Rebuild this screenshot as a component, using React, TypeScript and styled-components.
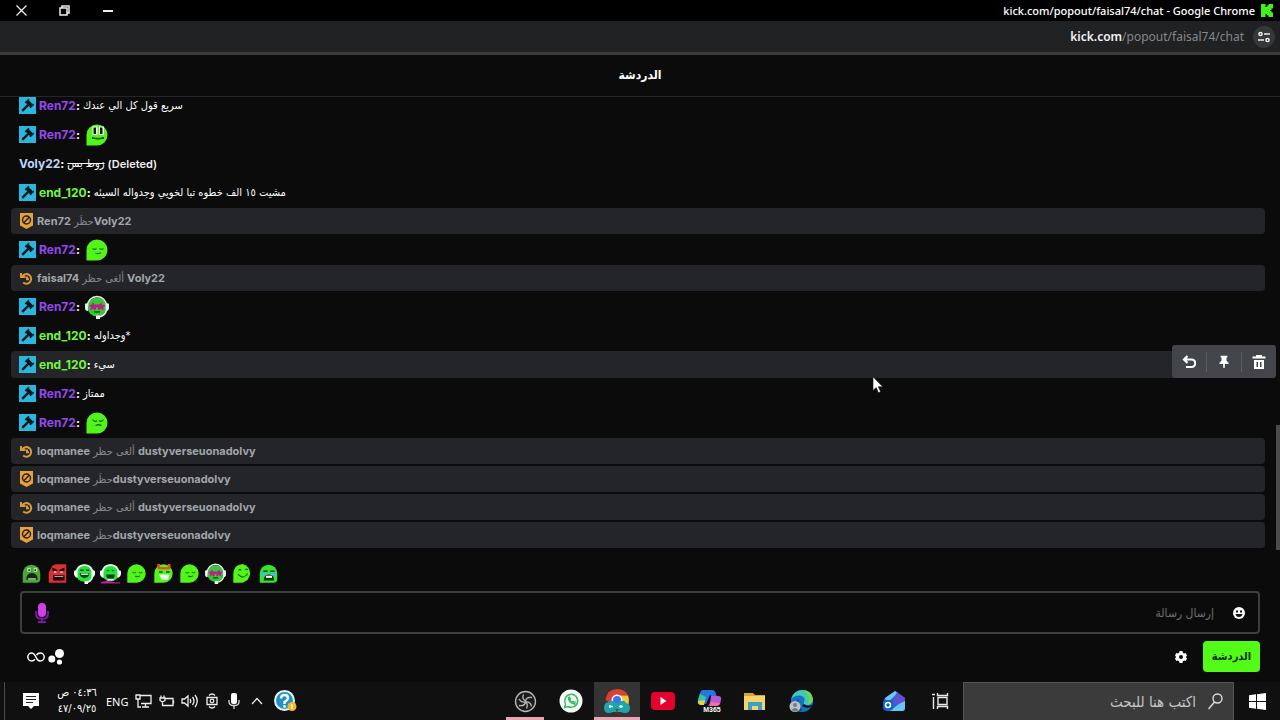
import React from "react";
import styled, { createGlobalStyle, css } from "styled-components";

const GlobalStyle = createGlobalStyle`
  *, *::before, *::after { box-sizing: border-box; }
  body {
    margin: 0;
    background: #0b0b0b;
    color: #fff;
    font-family: Inter, "DejaVu Sans Condensed", "DejaVu Sans", sans-serif;
    font-size: 13px;
    font-variant-ligatures: no-contextual;
  }
  button { font: inherit; color: inherit; background: none; border: 0; padding: 0; }
  svg { display: block; flex: none; }
`;

const arabicFace = `"DejaVu Sans Condensed", "DejaVu Sans", sans-serif`;

const Page = styled.div`
  display: flex;
  flex-direction: column;
  height: 100vh;
  overflow: hidden;
`;

/* ---------- browser window ---------- */

const TitleBar = styled.header`
  display: flex;
  align-items: center;
  justify-content: space-between;
  height: 21px;
  flex: none;
  background: #000;
  padding-right: 7px;
  font: 500 11px "Noto Sans", sans-serif;
`;

const WindowButtons = styled.div`
  display: flex;
`;

const WindowButton = styled.button`
  display: grid;
  place-items: center;
  width: 43px;
  height: 21px;
`;

const WindowTitle = styled.div`
  display: flex;
  align-items: center;
  gap: 6px;
`;

const AddressBar = styled.div`
  display: flex;
  align-items: center;
  justify-content: flex-end;
  gap: 9px;
  height: 34px;
  flex: none;
  padding-right: 5px;
  background: #202123;
  border-bottom: 3px solid #3a3b3c;
  color: #85888b;
  font: 12px "Noto Sans", sans-serif;
  b { color: #f2f2f2; font-weight: 600; }
`;

const SiteButton = styled.button`
  display: grid;
  place-items: center;
  width: 22px;
  height: 22px;
  border-radius: 50%;
  background: #35373a;
`;

/* ---------- chat ---------- */

const ChatHeader = styled.h1`
  display: grid;
  place-items: center;
  height: 42px;
  margin: 0;
  padding-bottom: 2px;
  flex: none;
  border-bottom: 1px solid #242628;
  font: 700 12px ${arabicFace};
`;

const Feed = styled.main`
  position: relative;
  display: flex;
  flex: 1;
  min-height: 0;
  flex-direction: column;
  justify-content: flex-end;
  overflow: hidden;
`;

const Messages = styled.ul`
  display: flex;
  flex-direction: column;
  gap: 2px;
  margin: 0;
  padding: 0 15px 2px 11px;
  list-style: none;
`;

const Thumb = styled.div`
  position: absolute;
  right: 0;
  bottom: 0;
  width: 4px;
  height: 125px;
  background: #4a4b4d;
`;

const Row = styled.li<{ $hovered?: boolean }>`
  position: relative;
  display: flex;
  align-items: center;
  gap: 3px;
  height: 27px;
  padding-left: 8px;
  border-radius: 4px;
  background: ${(p) => (p.$hovered ? "#232528" : "transparent")};
`;

const Notice = styled(Row)`
  height: 26px;
  gap: 3px;
  background: #232528;
  color: #a1a6aa;
  font-size: 11px;
  white-space: pre;
  b { font-weight: 700; }
`;

const Arabic = styled.bdi<{ $dim?: boolean }>`
  font-family: ${arabicFace};
  font-size: 11px;
  color: ${(p) => (p.$dim ? "#85898d" : "#fff")};
`;

const Author = styled.span<{ $color: string }>`
  font-weight: 700;
  font-size: 12px;
  color: ${(p) => p.$color};
  i { color: #fff; font-style: normal; }
`;

const Deleted = styled.span`
  font-size: 11px;
  font-weight: 600;
  color: #f0f0f0;
`;

const EmoteSlot = styled.span`
  margin-left: 2px;
`;

const Actions = styled.div`
  position: absolute;
  right: -11px;
  top: -6px;
  z-index: 1;
  display: flex;
  align-items: center;
  height: 33px;
  border-radius: 3px;
  background: #42464a;
`;

const Action = styled.button`
  display: grid;
  place-items: center;
  width: 34px;
  height: 20px;
  & + & { border-left: 1px solid #5b5f63; width: 35px; }
`;

const Cursor = styled.svg`
  position: absolute;
  left: 68.7%;
  top: 25px;
  z-index: 2;
`;

const Composer = styled.form`
  flex: none;
  padding: 12px 20px 10px;
`;

const QuickEmotes = styled.div`
  display: flex;
  justify-content: space-between;
  width: 258px;
  height: 22px;
  margin-left: 1px;
`;

const MessageBox = styled.div`
  display: flex;
  align-items: center;
  height: 43px;
  margin-top: 7px;
  padding: 0 13px;
  border: 2px solid #3c3e40;
  border-radius: 4px;
`;

const MessageInput = styled.input`
  flex: 1;
  min-width: 0;
  margin: 0 19px;
  padding: 0;
  border: 0;
  background: none;
  color: #fff;
  outline: none;
  font: 12px ${arabicFace};
  &::placeholder { color: #6d7072; opacity: 1; }
`;

const Controls = styled.div`
  display: flex;
  align-items: center;
  height: 31px;
  margin-top: 7px;
  padding-left: 7px;
  gap: 3px;
`;

const SendButton = styled.button`
  width: 57px;
  height: 31px;
  margin-left: 13px;
  border-radius: 4px;
  background: #53fc18;
  color: #0d2a06;
  font: 700 11px ${arabicFace};
`;

const SettingsButton = styled.button`
  margin-left: auto;
`;

/* ---------- taskbar ---------- */

const Taskbar = styled.footer`
  display: flex;
  align-items: stretch;
  height: 38px;
  flex: none;
  background: #101010;
  font: 11px "Noto Sans", "DejaVu Sans Condensed", sans-serif;
`;

const Tray = styled.div`
  display: flex;
  align-items: center;
  margin-left: 4px;
  border-left: 1px solid #4a4a4a;
`;

const TrayButton = styled.button<{ $w?: number }>`
  display: grid;
  place-items: center;
  width: ${(p) => p.$w ?? 23}px;
  height: 38px;
`;

const Clock = styled.time`
  width: 44px;
  margin: 0 7px 0 -2px;
  text-align: center;
  font: 11px/16px ${arabicFace};
`;

const Apps = styled.div`
  display: flex;
  margin-left: auto;
`;

const AppButton = styled.button<{ $active?: boolean; $running?: boolean }>`
  position: relative;
  display: grid;
  place-items: center;
  width: 46px;
  background: ${(p) => (p.$active ? "#343434" : "transparent")};
  ${(p) =>
    p.$running &&
    css`
      &::after {
        content: "";
        position: absolute;
        left: ${p.$active ? 0 : 4}px;
        right: ${p.$active ? 0 : 4}px;
        bottom: 0;
        height: 3px;
        background: #e8a6b4;
      }
    `}
`;

const Pinned = styled.div`
  display: flex;
  margin-left: 47px;
`;

const Search = styled.label`
  display: flex;
  align-items: center;
  gap: 12px;
  width: 271px;
  padding: 0 10px;
  border: 1px solid #555;
  border-bottom: 0;
  background: #3b3b3b;
  input {
    flex: 1;
    min-width: 0;
    padding: 0;
    border: 0;
    background: none;
    outline: none;
    font: 15px ${arabicFace};
    &::placeholder { color: #c4c4c4; opacity: 1; }
  }
`;

/* ---------- drawings ---------- */

const Badge = () => (
  <svg width="17" height="17" viewBox="0 0 17 17">
    <path fill="#2cb5dd" d="M0 0h17v17H0z" />
    <g stroke="#05181d" fill="none">
      <path strokeWidth="2.400" d="m3.200 13.800 6-6" />
      <path strokeWidth="4" d="m8 4.200 4.600 4.600" />
      <path strokeWidth="1.600" d="m6.300 5.900 3.700-3.700M11 10.800l3.700-3.700" />
    </g>
  </svg>
);

const BanIcon = () => (
  <svg width="15" height="16" viewBox="0 0 15 16">
    <path fill="#e9a13b" d="M1 0h13v12.500l-6.500 3.500L1 12.500z" />
    <circle cx="7.500" cy="7" r="4" fill="none" stroke="#2a2114" strokeWidth="1.500" />
    <path stroke="#2a2114" strokeWidth="1.500" d="m4.800 9.700 5.400-5.400" />
  </svg>
);

const UnbanIcon = () => (
  <svg width="15" height="15" viewBox="0 0 15 15" fill="none" stroke="#dc9a35" strokeWidth="2">
    <path d="M3.200 5.500a4.800 4.800 0 1 1 1 6" />
    <path d="M2 2v4h4.500M8 5.500v2.800h2" />
  </svg>
);

type EmoteKind =
  | "eyes" | "calm" | "sad" | "shades" | "yell" | "rage" | "laugh" | "cheer"
  | "mask" | "smile" | "cry";

const BLOB = "M12 1.500a10.500 10.500 0 0 1 0 21H1.500V12A10.500 10.500 0 0 1 12 1.500z";
const DOME = "M2 22.500V12a10 10 0 0 1 20 0v6q0 4.500-4.500 4.500z";

const faces: Record<EmoteKind, React.ReactNode> = {
  eyes: (
    <>
      <path fill="#53f41c" d={BLOB} />
      <path fill="#fff" d="M7.500 3.500h5v8.500h-5zM14 3.500h5v8.500h-5z" />
      <path fill="#10200a" d="M8.500 4.500H11V11H8.500zM15 4.500h2.500V11H15z" />
      <path stroke="#176808" strokeWidth="1.800" fill="none" d="M7 15h1.500q4.500 1.500 9 0H19" />
    </>
  ),
  calm: (
    <>
      <path fill="#53f41c" d={BLOB} />
      <path stroke="#1d7d0a" strokeWidth="1.300" fill="none" d="M7.500 10.500q2 1.800 4 0M14.500 10.500q2 1.800 4 0M10.500 15q3 1.500 5.500-.500" />
    </>
  ),
  sad: (
    <>
      <path fill="#53f41c" d={BLOB} />
      <path stroke="#1d6d0a" strokeWidth="1.300" fill="none" d="M7.500 8.500q2 3 4.500 1M14 9.500q2.500 2 4.500-1M10.500 14.500q3-1.500 6 0" />
    </>
  ),
  shades: (
    <>
      <circle cx="12" cy="12" r="9.500" fill="#35c936" />
      <path stroke="#eee" strokeWidth="1.600" fill="none" d="M2.500 11a9.500 9.500 0 0 1 19 0v4q-1 6-8 7" />
      <path fill="#eee" d="M0 9.500q0-1.500 3-1.500v8q-3 0-3-3zM24 9.500q0-1.500-3-1.500v8q3 0 3-3zM11 20.500h4V24h-4z" />
      <path fill="#c01b90" d="m8 7 1.300 2.600h5.400L16 7l1.300 2.700 3 .4-2 2.200.4 3-2.700-1.300-2.700 1.300-.3-2.800h-2l-.3 2.800L8 14l-2.700 1.300.4-3-2-2.200 3-.4z" />
      <path stroke="#14500f" strokeWidth="1.500" d="M9 17h6" />
    </>
  ),
  yell: (
    <>
      <path fill="#4aa83a" d={DOME} />
      <path fill="#b9dcae" d="M7 5.500h4v4.500H7zM14.500 5.500h4v4.500h-4z" />
      <path fill="#132a0d" d="M8.500 7H10v2H8.500zM15.500 7H17v2h-1.500zM6 19q0-7.500 6.500-7.500T19 19z" />
      <path fill="#c6dcc0" d="M8 17.500h9V19H8z" />
    </>
  ),
  rage: (
    <>
      <path fill="#d93035" d="M2 22.500V11l4-8 4-1.500h12v21z" />
      <path fill="#200707" d="m6 5 6 3-1 2.500-5-2zM20 5l-6 3 1 2.500 5-2zM7 14h13v6H7z" />
      <path fill="#eed0c8" d="M8 9.500h3V11H8zM15 9.500h3V11h-3zM8.500 15h10v1h-10z" />
    </>
  ),
  laugh: (
    <>
      <circle cx="12" cy="11.500" r="10" fill="#24e43c" />
      <path stroke="#eafff0" strokeWidth="2" fill="none" d="M3 9a9.500 9.500 0 0 1 18 0M21 16q-1 5-7 6" />
      <path fill="#fff" d="M0 10q0-2 4-2v9q-4-1-4-5zM24 10q0-2-4-2v9q4-1 4-5zM12 20.500h4V24h-4z" />
      <path fill="#0b4315" d="M7 7.500h4V9H7zM13.500 7.500h4V9h-4zM6.500 11.500h11q0 5.500-5.500 5.500t-5.500-5.500z" />
      <path fill="#e9fff0" d="M8 12h8.500v1.500H8z" />
    </>
  ),
  cheer: (
    <>
      <circle cx="12" cy="11" r="10" fill="#24e43c" />
      <path stroke="#eafff0" strokeWidth="2" fill="none" d="M3 9a9.500 9.500 0 0 1 18 0" />
      <path fill="#fff" d="M0 10q0-2 4-2v9q-4-1-4-5zM24 10q0-2-4-2v9q4-1 4-5z" />
      <path fill="#0b4315" d="M6.500 9 10.500 7.500v2zM17.500 9l-4-1.500v2zM7 13h10q-.500 6-5 6t-5-6z" />
      <path fill="#e7e5ef" d="M8.500 18h7v2h-7z" />
      <path fill="#c41aa0" d="M1 22q5-2 11-1t11 1v1.500H1z" />
    </>
  ),
  mask: (
    <>
      <path fill="#53f41c" d={BLOB} />
      <path fill="#e95324" d="M5 1h3v3.500h9V1h3v5l-2 1.500H7L5 6z" />
      <path fill="#154d09" d="M7 9.500h4V11H7zM15 9.500h4V11h-4z" />
      <path fill="#effbea" d="M7 13h12l-2 6h-7z" />
    </>
  ),
  smile: (
    <>
      <path fill="#53f41c" d="M12 1a11 11 0 0 1 0 21.500H1.500V12Q2 2 12 1z" />
      <path stroke="#176808" strokeWidth="1.400" fill="none" d="M7.500 8.500q1.500-2 3 0M15 8q1.500-2 3 0M7 13q6 6.500 11-1" />
    </>
  ),
  cry: (
    <>
      <path fill="#35e52a" d={DOME} />
      <path fill="#47b8ef" d="M5.500 10H10v5H5zM15 10h4.500l.5 5h-5z" />
      <path fill="#102f14" d="M6 8.500h5V10H6zM14 8.500h5V10h-5zM6.500 20q0-7 6-7t6 7z" />
      <path fill="#f3fff5" d="M9 14.500h7V17H9z" />
    </>
  ),
};

const Emote = ({ kind, size = 24 }: { kind: EmoteKind; size?: number }) => (
  <svg width={size} height={size} viewBox="0 0 24 24">{faces[kind]}</svg>
);

const KickLogo = () => (
  <svg width="12" height="13" viewBox="0 0 12 13">
    <path fill="#42f01a" d="M0 0h4.500v3H6V1.500h1.500V0H12v4.500h-1.500V6H9v1h1.500v1.500H12V13H7.500v-1.500H6V10H4.500v3H0z" />
  </svg>
);

/* ---------- data ---------- */

const purple = "#9448f0";
const green = "#72f83c";

type Item =
  | { type: "msg"; author: string; color: string; text?: string; emote?: EmoteKind; mod?: boolean; deleted?: boolean; hovered?: boolean }
  | { type: "ban" | "unban"; by: string; target: string };

const items: Item[] = [
  { type: "msg", author: "Ren72", color: purple, mod: true, text: "سريع قول كل الي عندك" },
  { type: "msg", author: "Ren72", color: purple, mod: true, emote: "eyes" },
  { type: "msg", author: "Voly22", color: "#bcd6fb", text: "زوط بس", deleted: true },
  { type: "msg", author: "end_120", color: green, mod: true, text: "مشيت ١٥ الف خطوه تبا لخويي وجدواله السيئه" },
  { type: "ban", by: "Ren72", target: "Voly22" },
  { type: "msg", author: "Ren72", color: purple, mod: true, emote: "calm" },
  { type: "unban", by: "faisal74", target: "Voly22" },
  { type: "msg", author: "Ren72", color: purple, mod: true, emote: "shades" },
  { type: "msg", author: "end_120", color: green, mod: true, text: "*وجداوله" },
  { type: "msg", author: "end_120", color: green, mod: true, text: "سيء", hovered: true },
  { type: "msg", author: "Ren72", color: purple, mod: true, text: "ممتاز" },
  { type: "msg", author: "Ren72", color: purple, mod: true, emote: "sad" },
  { type: "unban", by: "loqmanee", target: "dustyverseuonadolvy" },
  { type: "ban", by: "loqmanee", target: "dustyverseuonadolvy" },
  { type: "unban", by: "loqmanee", target: "dustyverseuonadolvy" },
  { type: "ban", by: "loqmanee", target: "dustyverseuonadolvy" },
];

const quick: EmoteKind[] = ["yell", "rage", "laugh", "cheer", "calm", "mask", "calm", "shades", "smile", "cry"];

const HoverTools = () => (
  <>
    <Actions>
      <Action aria-label="رد">
        <svg width="14" height="14" viewBox="0 0 14 14" fill="none" stroke="#fff" strokeWidth="2.200">
          <path d="M5.500 1 2 4.500 5.500 8M2 4.500h7.500a3.700 3.700 0 0 1 0 7.500H4" />
        </svg>
      </Action>
      <Action aria-label="تثبيت">
        <svg width="10" height="14" viewBox="0 0 12 15">
          <path fill="#fff" d="M2 0h8v2H9v4l2.500 2.500V10H7v4l-1 1-1-1v-4H.500V8.500L3 6V2H2z" />
        </svg>
      </Action>
      <Action aria-label="حذف">
        <svg width="14" height="14" viewBox="0 0 14 14">
          <path fill="#fff" fillRule="evenodd" d="M4 0h6v1.500h3.500v2H.500v-2H4zM2 5h10v9H2zm2.500 2v5H6V7zM8 7v5h1.500V7z" />
        </svg>
      </Action>
    </Actions>
    <Cursor width="12" height="18" viewBox="0 0 12 18">
      <path fill="#fff" stroke="#111" strokeWidth=".6" d="M1 .800v13.700l3.200-2.900 2.200 5.200 2.200-1-2.200-5h4.400z" />
    </Cursor>
  </>
);

const ChatItem = ({ item }: { item: Item }) => {
  if (item.type !== "msg") {
    const ban = item.type === "ban";
    return (
      <Notice>
        {ban ? <BanIcon /> : <UnbanIcon />}
        <span>
          <b>{item.by}</b> <Arabic $dim>{ban ? "حظَر" : "ألغى حظر"}</Arabic>
          {ban ? "" : " "}
          <b>{item.target}</b>
        </span>
      </Notice>
    );
  }
  return (
    <Row $hovered={item.hovered}>
      {item.mod && <Badge />}
      <Author $color={item.color}>{item.author}<i>:</i></Author>
      {item.text && <Arabic as={item.deleted ? "s" : "bdi"} dir="rtl">{item.text}</Arabic>}
      {item.deleted && <Deleted>(Deleted)</Deleted>}
      {item.emote && <EmoteSlot><Emote kind={item.emote} /></EmoteSlot>}
      {item.hovered && <HoverTools />}
    </Row>
  );
};

const stroke = { fill: "none", stroke: "#eee", strokeWidth: 1.3 };

const SystemTaskbar = () => (
  <Taskbar>
    <Tray>
      <TrayButton $w={52} aria-label="الإشعارات">
        <svg width="16" height="16" viewBox="0 0 16 16">
          <path fill="#fff" d="M0 0h16v13h-5l-3 3-3-3H0z" />
          <path stroke="#222" d="M3 3.500h10M3 6.500h10M3 9.500h7" />
        </svg>
      </TrayButton>
      <Clock><bdi dir="rtl">٠٤:٣٦ ص</bdi><br />٤٧/٠٩/٢٥</Clock>
    </Tray>
    <TrayButton $w={22}>ENG</TrayButton>
    <TrayButton $w={31} aria-label="الشبكة">
      <svg width="17" height="14" viewBox="0 0 17 14" {...stroke}>
        <path d="M5 1.500h11v8H6M10.500 9.500V13M7 13h7M1 1h4v4H1zM3 5v8h3" />
      </svg>
    </TrayButton>
    <TrayButton $w={16} aria-label="البطارية">
      <svg width="16" height="13" viewBox="0 0 16 13" {...stroke}>
        <path d="M6 3.500h8v7H5M14.500 5.500v3M1 3h5v2.500L3.500 7 1 5.500zM2 3V.500M5 3V.500M3.500 7v3.500H6" />
      </svg>
    </TrayButton>
    <TrayButton $w={28} aria-label="الصوت">
      <svg width="17" height="14" viewBox="0 0 17 14" {...stroke}>
        <path d="M1 5v4h2.500L7 12V2L3.500 5zM9 5q1.500 2 0 4M11.500 3q3 4 0 8M14 1q4.500 6 0 12" />
      </svg>
    </TrayButton>
    <TrayButton $w={18} aria-label="الكاميرا">
      <svg width="12" height="16" viewBox="0 0 12 16" {...stroke}>
        <path d="M1 4.500h10v7H1zM3 2.500q3-3 6 0M3 13.500q3 3 6 0" />
        <circle cx="6" cy="8" r="1.800" />
      </svg>
    </TrayButton>
    <TrayButton $w={26} aria-label="الميكروفون">
      <svg width="12" height="16" viewBox="0 0 12 16">
        <rect x="3" width="6" height="11" rx="2" fill="#fff" />
        <path stroke="#ddd" strokeWidth="1.300" fill="none" d="M1 7v2q0 3.500 5 3.500T11 9V7M6 12v4" />
      </svg>
    </TrayButton>
    <TrayButton $w={20} aria-label="إظهار الرموز المخفية">
      <svg width="12" height="8" viewBox="0 0 12 8" {...stroke}><path d="m1 7 5-5.500L11 7" /></svg>
    </TrayButton>
    <TrayButton $w={37} aria-label="تعليمات">
      <svg width="23" height="22" viewBox="0 0 23 22">
        <circle cx="10.500" cy="10.500" r="9.500" fill="#2092c3" stroke="#e8f6fb" strokeWidth="2" />
        <path fill="none" stroke="#fff" strokeWidth="2.400" d="M7 8.500Q7 5 10.500 5T14 8q0 2-3.500 4v2" />
        <circle cx="10.500" cy="16.500" r="1.400" fill="#fff" />
        <circle cx="18" cy="16.500" r="4.500" fill="#efb833" />
        <path stroke="#fff3c8" strokeWidth="1.500" d="M18 14v5" />
      </svg>
    </TrayButton>

    <Apps>
      <AppButton $running aria-label="OBS">
        <svg width="23" height="23" viewBox="0 0 23 23" fill="none" stroke="#b8b8b8" strokeWidth="1.300">
          <circle cx="11.500" cy="11.500" r="10" fill="#1c1c1c" />
          <path d="M9.500 4.500q-2 4 2 6.500M11.500 11q1-4.500 6.500-3.500M17.500 16.500q-1-5-6-4.500M11.500 12q-1 4.500-6.500 3.500M5 9q2.500 4 6.500 3M12.500 18.500q2-4-1-6.500" />
        </svg>
      </AppButton>
      <AppButton aria-label="WhatsApp">
        <svg width="24" height="24" viewBox="0 0 24 24">
          <circle cx="12" cy="12" r="11.500" fill="#f6fbf7" />
          <path fill="none" stroke="#35bd65" strokeWidth="1.500" d="m5.500 18.500 1-3.500a6.500 6.500 0 1 1 2.500 2.500z" />
          <path fill="none" stroke="#35bd65" strokeWidth="1.600" d="M9.500 8.500q0 5 6 6.500l.5-1.500-2-1-1 1-2.500-2.500.8-1-1-1.800z" />
        </svg>
      </AppButton>
      <AppButton $active $running aria-label="Google Chrome">
        <svg width="28" height="26" viewBox="0 0 28 26">
          <path fill="#dd4031" d="M2.500 12Q4 1 14.500 1 22 1 25 7.500H14L9 16z" />
          <path fill="#f7c83a" d="M15 7.500h10q2 6-.500 12L17 20z" />
          <circle cx="14" cy="12" r="5.500" fill="#fff" />
          <circle cx="14" cy="12" r="4" fill="#3a78e8" />
          <path fill="#22a3ab" d="M1 20q0-6 5-6 1-2 4-1l4 3 4-3q4-1 5 2 4 1 4 5 0 5-5 5-3 0-4-1h-8q-2 1-4 1-5 0-5-5z" />
          <path stroke="#d4f4f4" strokeWidth="1.500" fill="none" d="M6 18.500h4M16 18.500h4M7 17v3M18 17v3" />
          <path fill="#7b4a2c" d="M12 21h4l-2 4z" />
        </svg>
      </AppButton>
      <AppButton aria-label="YouTube">
        <svg width="24" height="18" viewBox="0 0 24 18">
          <rect width="24" height="18" rx="4" fill="#e4002f" />
          <path fill="#fff" d="m9.500 5 6 4-6 4z" />
        </svg>
      </AppButton>
      <AppButton aria-label="Microsoft 365">
        <svg width="25" height="24" viewBox="0 0 25 24">
          <path fill="#2576e3" d="M6 1h9q3 0 4 4l1 3h-4l-3-2-4 9H3q-3 0-2-4l2-7q1-3 3-3z" />
          <path fill="#32c79b" d="M3 5 9 8l-2 7H3q-3 0-2-4z" />
          <path fill="#f1cd45" d="m1 12 7-1-1 5H3q-2-1-2-4z" />
          <path fill="#ba55d8" d="M14 7h7q4 0 3 4l-1 4q-1 2-4 2h-8q2-1 3-10z" />
          <path fill="#f0729f" d="m14 13 9 1q-1 3-4 3h-6z" />
          <text x="15" y="23" textAnchor="middle" fill="#fff" fontFamily="Liberation Sans" fontWeight="700" fontSize="7">M365</text>
        </svg>
      </AppButton>
      <AppButton aria-label="مستكشف الملفات">
        <svg width="22" height="19" viewBox="0 0 22 19">
          <path fill="#d8a42d" d="M0 1h9l2 2h10v4H0z" />
          <path fill="#f5d36c" d="M0 4h21v14H0z" />
          <path fill="#3a9fc3" d="M4 10h14v8h-4v-4H8v4H4z" />
        </svg>
      </AppButton>
      <AppButton aria-label="Microsoft Edge">
        <svg width="25" height="24" viewBox="0 0 25 24">
          <circle cx="13" cy="12" r="11" fill="#1574c4" />
          <path fill="#43c9b3" d="M2 10Q5 1 14 1q9 1 10 10-.500 5-6 5-4 0-3-3 2-4-2-6Q7 5 2 10z" />
          <path fill="#6ed650" d="M15 1q8 1 9 9-1 5-5 5 3-7-4-14z" />
          <path fill="#0d4c8a" d="M10 10q-2 7 4 11-5 3-9-1-2-6 5-10z" />
          <path fill="#101010" d="M15 15q3 3 8 1l-1 2q-5 2-9-1z" />
          <circle cx="6" cy="17.500" r="5.500" fill="#bcc2c5" />
          <circle cx="6" cy="16" r="2" fill="#737b80" />
          <path fill="#737b80" d="M2.500 21q3.500-4 7 0-3.500 3-7 0z" />
        </svg>
      </AppButton>
    </Apps>
    <Pinned>
      <AppButton aria-label="Outlook">
        <svg width="23" height="22" viewBox="0 0 23 22">
          <path fill="#2169cf" d="m1 9 11-8 10 7v10q0 3-3 3H4q-3 0-3-3z" />
          <path fill="#67c8f5" d="m2 8 10-7 3 2L4 13zM7 21 22 9v9q0 3-3 3z" />
          <path fill="#6150cf" d="m14 2 8 6v3l-8 4-5-3z" />
          <rect y="10" width="10" height="10" rx="2" fill="#1163c7" />
          <circle cx="5" cy="15" r="2.500" fill="none" stroke="#fff" strokeWidth="1.500" />
        </svg>
      </AppButton>
      <AppButton aria-label="عرض المهام">
        <svg width="17" height="16" viewBox="0 0 17 16" fill="none" stroke="#e8e8e8" strokeWidth="1.400">
          <path d="M6 4.500h9v7H6zM5.500 0v2.500h10V0M5.500 16v-2.500h10V16M1.500 4v12M0 1.500h3" />
        </svg>
      </AppButton>
      <Search dir="rtl">
        <svg width="15" height="17" viewBox="0 0 15 17" fill="none" stroke="#ddd" strokeWidth="1.400">
          <circle cx="9.500" cy="5.500" r="4.500" /><path d="M6.500 9 .500 16" />
        </svg>
        <input type="text" aria-label="بحث" placeholder="اكتب هنا للبحث" />
      </Search>
      <AppButton aria-label="ابدأ">
        <svg width="17" height="17" viewBox="0 0 17 17">
          <path fill="#fff" d="m0 2.300 7-1V8H0zM8 1.200 17 0v8H8zM0 9h7v6.700l-7-1zM8 9h9v8l-9-1.200z" />
        </svg>
      </AppButton>
    </Pinned>
  </Taskbar>
);

export default function App() {
  return (
    <Page>
      <GlobalStyle />
      <TitleBar>
        <WindowButtons>
          <WindowButton aria-label="إغلاق">
            <svg width="11" height="11" viewBox="0 0 11 11" stroke="#eee" strokeWidth="1.300"><path d="m.500.500 10 10M10.500.500l-10 10" /></svg>
          </WindowButton>
          <WindowButton aria-label="استعادة">
            <svg width="11" height="11" viewBox="0 0 11 11" fill="none" stroke="#eee" strokeWidth="1.500"><path d="M1 3h7v7H1zM3 3V1h7v7H8" /></svg>
          </WindowButton>
          <WindowButton aria-label="تصغير">
            <svg width="10" height="2" viewBox="0 0 10 2"><path fill="#eee" d="M0 0h10v2H0z" /></svg>
          </WindowButton>
        </WindowButtons>
        <WindowTitle>kick.com/popout/faisal74/chat - Google Chrome <KickLogo /></WindowTitle>
      </TitleBar>
      <AddressBar>
        <span><b>kick.com</b>/popout/faisal74/chat</span>
        <SiteButton aria-label="معلومات الموقع">
          <svg width="12" height="12" viewBox="0 0 12 12" fill="none" stroke="#eee" strokeWidth="1.500">
            <circle cx="2.500" cy="3" r="1.600" /><path d="M6 3h6M0 9h6" /><circle cx="9.500" cy="9" r="1.600" />
          </svg>
        </SiteButton>
      </AddressBar>
      <ChatHeader>الدردشة</ChatHeader>
      <Feed>
        <Messages>
          {items.map((item, i) => <ChatItem key={i} item={item} />)}
        </Messages>
        <Thumb />
      </Feed>
      <Composer onSubmit={(e) => e.preventDefault()}>
        <QuickEmotes>
          {quick.map((kind, i) => (
            <button type="button" key={i} aria-label={kind}><Emote kind={kind} size={21} /></button>
          ))}
        </QuickEmotes>
        <MessageBox>
          <svg width="14" height="20" viewBox="0 0 14 20">
            <rect x="3" width="8" height="14" rx="4" fill="#cf3fe6" />
            <path fill="none" stroke="#7d16a0" strokeWidth="1.800" d="M1 8v3q0 5 6 5t6-5V8M7 16v3M3 19h8" />
          </svg>
          <MessageInput dir="rtl" aria-label="إرسال رسالة" placeholder="إرسال رسالة" />
          <button type="button" aria-label="الرموز التعبيرية">
            <svg width="12" height="12" viewBox="0 0 12 12">
              <circle cx="6" cy="6" r="6" fill="#fff" />
              <path fill="#111" d="M3 3.500h2v2H3zM7 3.500h2v2H7zM2.500 7h7Q9 10 6 10T2.500 7z" />
            </svg>
          </button>
        </MessageBox>
        <Controls>
          <svg width="18" height="12" viewBox="0 0 18 12" fill="none" stroke="#fff" strokeWidth="1.500">
            <path d="M8 8.200C7 9.300 6 10 4.800 10a3.900 3.900 0 1 1 0-8C7.500 2 9 6 10 8.200c.7 1.200 1.800 1.800 3.200 1.800a3.900 3.900 0 1 0 0-8c-1.500 0-2.700.8-3.700 2" />
          </svg>
          <svg width="17" height="16" viewBox="0 0 17 16" fill="#fff">
            <circle cx="11.500" cy="4.500" r="4.500" /><circle cx="3.800" cy="10" r="3.500" /><circle cx="11.500" cy="13" r="2.600" />
          </svg>
          <SettingsButton type="button" aria-label="إعدادات الدردشة">
            <svg width="12" height="12" viewBox="0 0 12 12">
              <path fill="#fff" fillRule="evenodd" d="M4.500 0h3l.400 1.700 1.200.700L10.700 2l1.300 2.500L10.900 6l1.100 1.500-1.300 2.500-1.600-.500-1.200.800L7.500 12h-3l-.400-1.700-1.200-.800-1.600.500L0 7.500 1.100 6 0 4.500 1.300 2l1.600.400 1.200-.700zM6 4a2 2 0 1 0 0 4 2 2 0 0 0 0-4z" />
            </svg>
          </SettingsButton>
          <SendButton type="submit">الدردشة</SendButton>
        </Controls>
      </Composer>
      <SystemTaskbar />
    </Page>
  );
}
